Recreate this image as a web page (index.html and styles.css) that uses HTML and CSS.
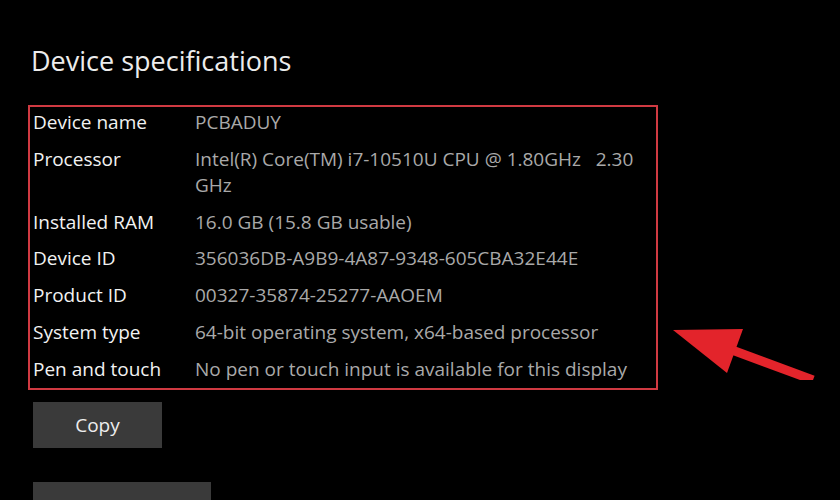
FILE: index.html
```html
<!DOCTYPE html>
<html>
<head>
<meta charset="utf-8">
<link rel="stylesheet" href="styles.css">
</head>
<body>
<main class="page">
  <h1 class="title">Device specifications</h1>
  <section class="specs">
    <div class="row"><div class="label">Device name</div><div class="value">PCBADUY</div></div>
    <div class="row"><div class="label">Processor</div><div class="value">Intel(R) Core(TM) i7-10510U CPU @ 1.80GHz&nbsp;&nbsp; 2.30<br>GHz</div></div>
    <div class="row"><div class="label">Installed RAM</div><div class="value">16.0 GB (15.8 GB usable)</div></div>
    <div class="row"><div class="label">Device ID</div><div class="value">356036DB-A9B9-4A87-9348-605CBA32E44E</div></div>
    <div class="row"><div class="label">Product ID</div><div class="value">00327-35874-25277-AAOEM</div></div>
    <div class="row"><div class="label">System type</div><div class="value">64-bit operating system, x64-based processor</div></div>
    <div class="row"><div class="label">Pen and touch</div><div class="value">No pen or touch input is available for this display</div></div>
  </section>
  <div class="actions">
    <button class="btn btn-copy">Copy</button>
    <button class="btn btn-rename" aria-label="Rename this PC"></button>
  </div>
  <svg class="arrow" width="160" height="70" viewBox="0 0 160 70">
    <polygon points="3,20 73,19 57,63" fill="#e3242b"/>
    <line x1="62" y1="40" x2="143" y2="70" stroke="#e3242b" stroke-width="9"/>
  </svg>
</main>
</body>
</html>
```
FILE: styles.css
```css
html, body {
  margin: 0;
  padding: 0;
  background: #000;
  overflow: hidden;
}
body {
  width: 840px;
  height: 500px;
  font-family: "Open Sans", "Noto Sans", sans-serif;
}
.page {
  position: relative;
  padding: 43px 0 0 28px;
}
.title {
  margin: 0 0 0 3px;
  font-weight: 400;
  font-size: 27px;
  line-height: 36px;
  color: #ececec;
}
.specs {
  margin-top: 26px;
  width: 623px;
  border: 2px solid #d03a42;
  padding: 2px 0 6px 3px;
  display: flex;
  flex-direction: column;
  gap: 10.75px;
}
.row {
  display: flex;
  font-size: 19px;
  line-height: 26px;
}
.label {
  width: 162px;
  flex-shrink: 0;
  color: #f2f2f2;
}
.value {
  color: #a9a9a9;
}
.actions {
  display: flex;
  flex-direction: column;
  align-items: flex-start;
  gap: 34px;
  margin: 12px 0 0 5px;
}
.btn {
  border: none;
  background: #3a3a3a;
  color: #ededed;
  font-family: inherit;
  font-size: 19px;
  height: 46px;
  padding: 0;
}
.btn-copy {
  width: 129px;
}
.btn-rename {
  width: 178px;
}
.arrow {
  position: absolute;
  left: 670px;
  top: 310px;
}
```
